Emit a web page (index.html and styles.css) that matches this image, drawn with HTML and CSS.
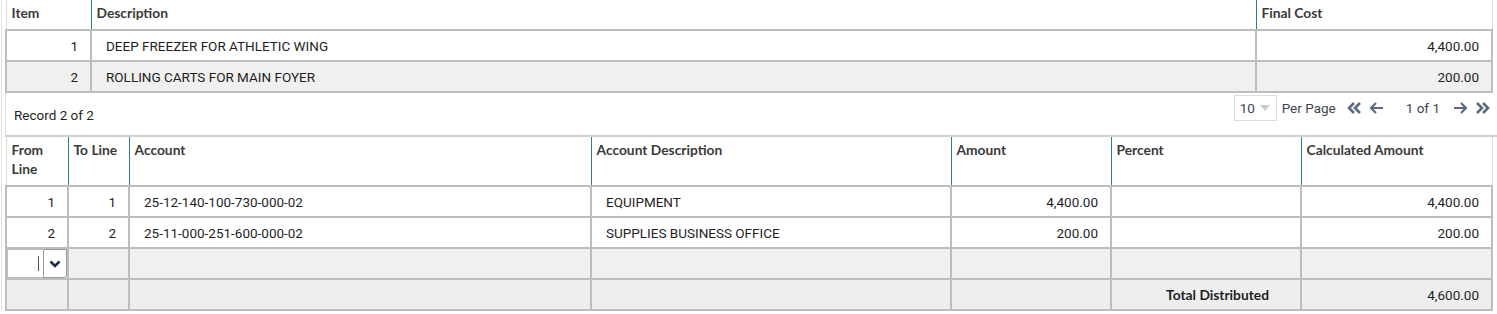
FILE: index.html
```html
<!DOCTYPE html>
<html>
<head>
<title>Purchase order distribution</title>
<meta name="viewport" content="width=device-width, initial-scale=1"/>
<link rel="stylesheet" href="styles.css">
</head>
<body>

<div class="panel">

  <!-- line items -->
  <table class="grid items">
    <colgroup>
      <col style="width:85px">
      <col style="width:1165px">
      <col style="width:236px">
    </colgroup>
    <thead>
      <tr>
        <th>Item</th>
        <th>Description</th>
        <th>Final Cost</th>
      </tr>
    </thead>
    <tbody>
      <tr>
        <td class="num">1</td>
        <td class="text">DEEP FREEZER FOR ATHLETIC WING</td>
        <td class="num">4,400.00</td>
      </tr>
      <tr class="alt">
        <td class="num">2</td>
        <td class="text">ROLLING CARTS FOR MAIN FOYER</td>
        <td class="num">200.00</td>
      </tr>
    </tbody>
  </table>

  <div class="pager">
    <span class="record">Record 2 of 2</span>
    <div class="pager-controls">
      <div class="page-size">
        <span>10</span>
        <svg width="10" height="6" viewBox="0 0 10 6"><path d="M0 0h10L5 6z" fill="#c9cdd2"/></svg>
      </div>
      <span class="per-page">Per Page</span>
      <svg class="nav" width="16" height="14" viewBox="0 0 16 14"><path d="M8 2L3 7l5 5M14 2L9 7l5 5" fill="none" stroke="#5d6b80" stroke-width="2.6"/></svg>
      <svg class="nav" width="15" height="14" viewBox="0 0 15 14"><path d="M14 7H2M7 2L2 7l5 5" fill="none" stroke="#5d6b80" stroke-width="2.2"/></svg>
      <span class="page-of">1 of 1</span>
      <svg class="nav" width="15" height="14" viewBox="0 0 15 14"><path d="M1 7h12M8 2l5 5-5 5" fill="none" stroke="#5d6b80" stroke-width="2.2"/></svg>
      <svg class="nav" width="16" height="14" viewBox="0 0 16 14"><path d="M2 2l5 5-5 5M8 2l5 5-5 5" fill="none" stroke="#5d6b80" stroke-width="2.6"/></svg>
    </div>
  </div>

  <!-- account distribution -->
  <table class="grid dist">
    <colgroup>
      <col style="width:62px">
      <col style="width:61px">
      <col style="width:462px">
      <col style="width:360px">
      <col style="width:160px">
      <col style="width:190px">
      <col style="width:191px">
    </colgroup>
    <thead>
      <tr>
        <th>From<br>Line</th>
        <th>To Line</th>
        <th>Account</th>
        <th>Account Description</th>
        <th>Amount</th>
        <th>Percent</th>
        <th>Calculated Amount</th>
      </tr>
    </thead>
    <tbody>
      <tr>
        <td class="num">1</td>
        <td class="num">1</td>
        <td class="text">25-12-140-100-730-000-02</td>
        <td class="text">EQUIPMENT</td>
        <td class="num">4,400.00</td>
        <td></td>
        <td class="num">4,400.00</td>
      </tr>
      <tr>
        <td class="num">2</td>
        <td class="num">2</td>
        <td class="text">25-11-000-251-600-000-02</td>
        <td class="text">SUPPLIES BUSINESS OFFICE</td>
        <td class="num">200.00</td>
        <td></td>
        <td class="num">200.00</td>
      </tr>
      <tr class="alt">
        <td class="picker">
          <div class="combo">
            <span class="combo-input"><i></i></span>
            <span class="combo-btn">
              <svg width="12" height="8" viewBox="0 0 12 8"><path d="M1.5 1.5L6 6l4.5-4.5" fill="none" stroke="#1d2b4a" stroke-width="2.6"/></svg>
            </span>
          </div>
        </td>
        <td></td><td></td><td></td><td></td><td></td><td></td>
      </tr>
      <tr class="total">
        <td></td><td></td><td></td><td></td><td></td>
        <td class="label">Total Distributed</td>
        <td class="num">4,600.00</td>
      </tr>
    </tbody>
  </table>

</div>

</body>
</html>
```

FILE: styles.css
```css
html, body {margin:0; padding:0; background:#fff;}
body {
 color: #1f1f1f;
 font: normal 13.5px/18px Roboto, "Liberation Sans", sans-serif;
}

.panel {
 margin-left: 1px;
 border-left: 1px solid #e2e2e2;
 padding-left: 3px;
 width: 1492px;
}

.grid {
 border-collapse: collapse;
 table-layout: fixed;
 width: 1487px;
}
.grid th {
 font: bold 13.8px/19px Lato, "Open Sans", sans-serif;
 color: #3a3a3a;
 text-align: left;
 vertical-align: top;
 padding: 3px 5px 0 5px;
 border-left: 1px solid #2c8188;
 border-bottom: 2px solid #bdbdbd;
}
.grid th:first-child {border-left: 1px solid #dcdcdc;}
.grid th:last-child {border-right: 1px solid #dcdcdc;}
.grid td {
 border: 2px solid #bdbdbd;
 padding: 0 12px;
 white-space: nowrap;
}
.grid tbody tr {height: 31px;}
.grid td.num {text-align: right;}
.grid td.text {padding-left: 14px;}
.grid tr.alt td {background: #f0f0f0;}

.items thead tr {height: 30px;}
.dist thead tr {height: 49px;}

/* record count + paging strip between the two grids */
.pager {
 display: flex;
 justify-content: space-between;
 align-items: flex-start;
 height: 42px;
 border-left: 1px solid #dcdcdc;
 border-right: 1px solid #dcdcdc;
 border-bottom: 2px solid #cfcfcf;
 margin-right: -2px;
}
.record {padding: 13px 0 0 8px;}
.pager-controls {
 display: flex;
 align-items: center;
 padding-top: 2px;
 color: #3e4552;
}
.page-size {
 display: flex;
 align-items: center;
 justify-content: space-between;
 box-sizing: border-box;
 width: 43px;
 height: 26px;
 padding: 0 6px 0 5px;
 border: 1px solid #dcdcdc;
}
.per-page {margin: 0 10px 0 5px;}
.nav {margin-right: 7px;}
.page-of {margin: 0 13px 0 15px;}

.picker {padding: 0 !important;}
.combo {display: flex; height: 29px;}
.combo-input {
 width: 37px;
 background: #fff;
 border: 1px solid #bdbdbd;
 border-right: none;
 position: relative;
}
.combo-input i {
 position: absolute;
 right: 4px; top: 6px;
 width: 1px; height: 15px;
 background: #555;
}
.combo-btn {
 display: flex;
 align-items: center;
 justify-content: center;
 width: 23px;
 background: #fff;
 border: 1px solid #9a9a9a;
 border-radius: 0 0 3px 0;
}

.total td {background: #eeeeee;}
.total td.label {
 font: bold 13.8px Lato, "Open Sans", sans-serif;
 text-align: right;
 padding-right: 31px;
}
```
